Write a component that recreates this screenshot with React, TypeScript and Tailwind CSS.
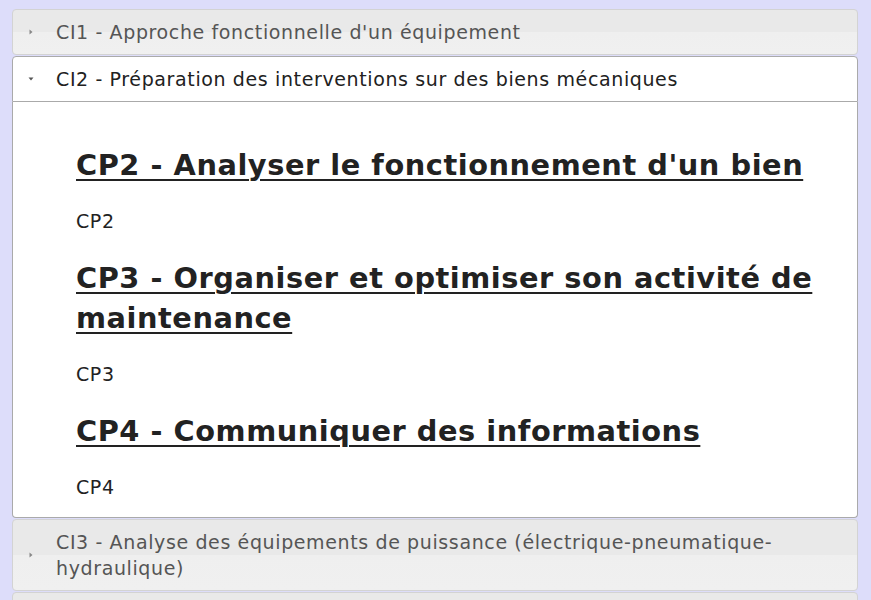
import React from 'react';

const sections = [
  { code: 'CP2', title: "CP2 - Analyser le fonctionnement d'un bien" },
  { code: 'CP3', title: 'CP3 - Organiser et optimiser son activité de maintenance' },
  { code: 'CP4', title: 'CP4 - Communiquer des informations' },
];

function Arrow({ open }: { open?: boolean }) {
  return (
    <span className="absolute left-[15px] top-1/2 -translate-y-1/2 flex w-[6px] h-[6px] items-center justify-center">
      {open ? (
        <svg width="6" height="6" viewBox="0 0 6 6">
          <path d="M0.5 1.5 L5.5 1.5 L3 4.5 Z" fill="#555" />
        </svg>
      ) : (
        <svg width="6" height="6" viewBox="0 0 6 6">
          <path d="M1.5 0.5 L4.5 3 L1.5 5.5 Z" fill="#888" />
        </svg>
      )}
    </span>
  );
}

function Header({ label, open }: { label?: string; open?: boolean }) {
  return (
    <div
      className={
        'relative min-h-[46px] pl-[43px] pr-[9px] py-[9px] text-[19px] leading-[26px] tracking-[0.62px] border ' +
        (open
          ? 'bg-white border-[#aaaaaa] rounded-t-[4px] text-[#212121]'
          : 'bg-[linear-gradient(to_bottom,#e9e9e9_0%,#e9e9e9_50%,#efefef_50%,#f0f0f0_100%)] border-[#d3d3d3] rounded-[4px] text-[#555555]')
      }
    >
      {label && <Arrow open={open} />}
      {label}
    </div>
  );
}

export default function App() {
  return (
    <div
      className="h-[600px] overflow-hidden bg-[#ddddfa] pl-[12px] pr-[13px] pt-[9px]"
      style={{ fontFamily: '"DejaVu Sans", Verdana, sans-serif' }}
    >
      <div className="flex flex-col">
        <Header label="CI1 - Approche fonctionnelle d'un équipement" />
        <div className="mt-[1px]">
          <Header label="CI2 - Préparation des interventions sur des biens mécaniques" open />
          <div className="bg-white border border-t-0 border-[#aaaaaa] rounded-b-[4px] pl-[63px] pr-[30px] pt-[43px] pb-[17px] text-[#222222]">
            {sections.map((s, i) => (
              <div key={s.code} className={i > 0 ? 'mt-[24px]' : ''}>
                <h2 className="text-[28.8px] leading-[40px] font-bold tracking-[0.55px] underline decoration-[2px] underline-offset-[4px]">
                  {s.title}
                </h2>
                <p className="mt-[23px] text-[19px] leading-[26px] tracking-[0.6px]">{s.code}</p>
              </div>
            ))}
          </div>
        </div>
        <div className="mt-[1px]">
          <Header label="CI3 - Analyse des équipements de puissance (électrique-pneumatique-hydraulique)" />
        </div>
        <div className="mt-[1px]">
          <Header />
        </div>
      </div>
    </div>
  );
}
